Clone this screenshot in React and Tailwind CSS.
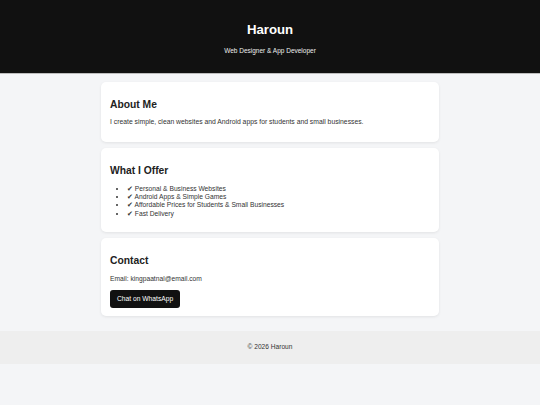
const offers = [
    "✔ Personal & Business Websites",
    "✔ Android Apps & Simple Games",
    "✔ Affordable Prices for Students & Small Businesses",
    "✔ Fast Delivery",
];

const Card = ({ title, children, className = "pb-[10px]" }) => (
    <section className={`w-[338px] mx-auto bg-white rounded-[5px] shadow-[0_1px_3px_rgba(0,0,0,0.08)] px-[9px] pt-[10px] ${className}`}>
        <h2 className="mt-[6px] text-[10.3px] leading-[14px] font-bold text-[#222]">{title}</h2>
        {children}
    </section>
);

export default function App() {
    return (
        <div className="min-h-[405px] bg-[#f4f5f7] text-[#333]" style={{ fontFamily: '"Liberation Sans", Arial, sans-serif' }}>

            {/* Header */}
            <header className="h-[74px] bg-[#111] border-b border-[#bdbdbd] flex flex-col items-center text-white">
                <h1 className="mt-[21px] text-[13.2px] leading-[18px] font-bold">Haroun</h1>
                <p className="mt-[7px] text-[6.5px] leading-[9px] text-[#eee]">Web Designer &amp; App Developer</p>
            </header>

            {/* Sections */}
            <main className="pt-[8px] flex flex-col gap-[6px]">
                <Card title="About Me">
                    <p className="mt-[6px] mb-[6px] text-[6.8px] leading-[8px]">
                        I create simple, clean websites and Android apps for students and small businesses.
                    </p>
                </Card>

                <Card title="What I Offer">
                    <ul className="mt-[7px] mb-[4px] pl-[17px] list-disc text-[6.7px] leading-[8.2px]">
                        {offers.map((o) => (
                            <li key={o}>{o}</li>
                        ))}
                    </ul>
                </Card>

                <Card title="Contact" className="pb-[8px]">
                    <p className="mt-[7px] text-[6.7px] leading-[8px]">Email: kingpaatnal@email.com</p>
                    <button className="mt-[7px] h-[18px] px-[7px] bg-[#111] text-white text-[6.7px] rounded-[3px]">
                        Chat on WhatsApp
                    </button>
                </Card>
            </main>

            {/* Footer */}
            <footer className="mt-[15px] h-[33px] bg-[#eee] flex items-center justify-center text-[6.6px]">
                © 2026 Haroun
            </footer>
        </div>
    );
}
